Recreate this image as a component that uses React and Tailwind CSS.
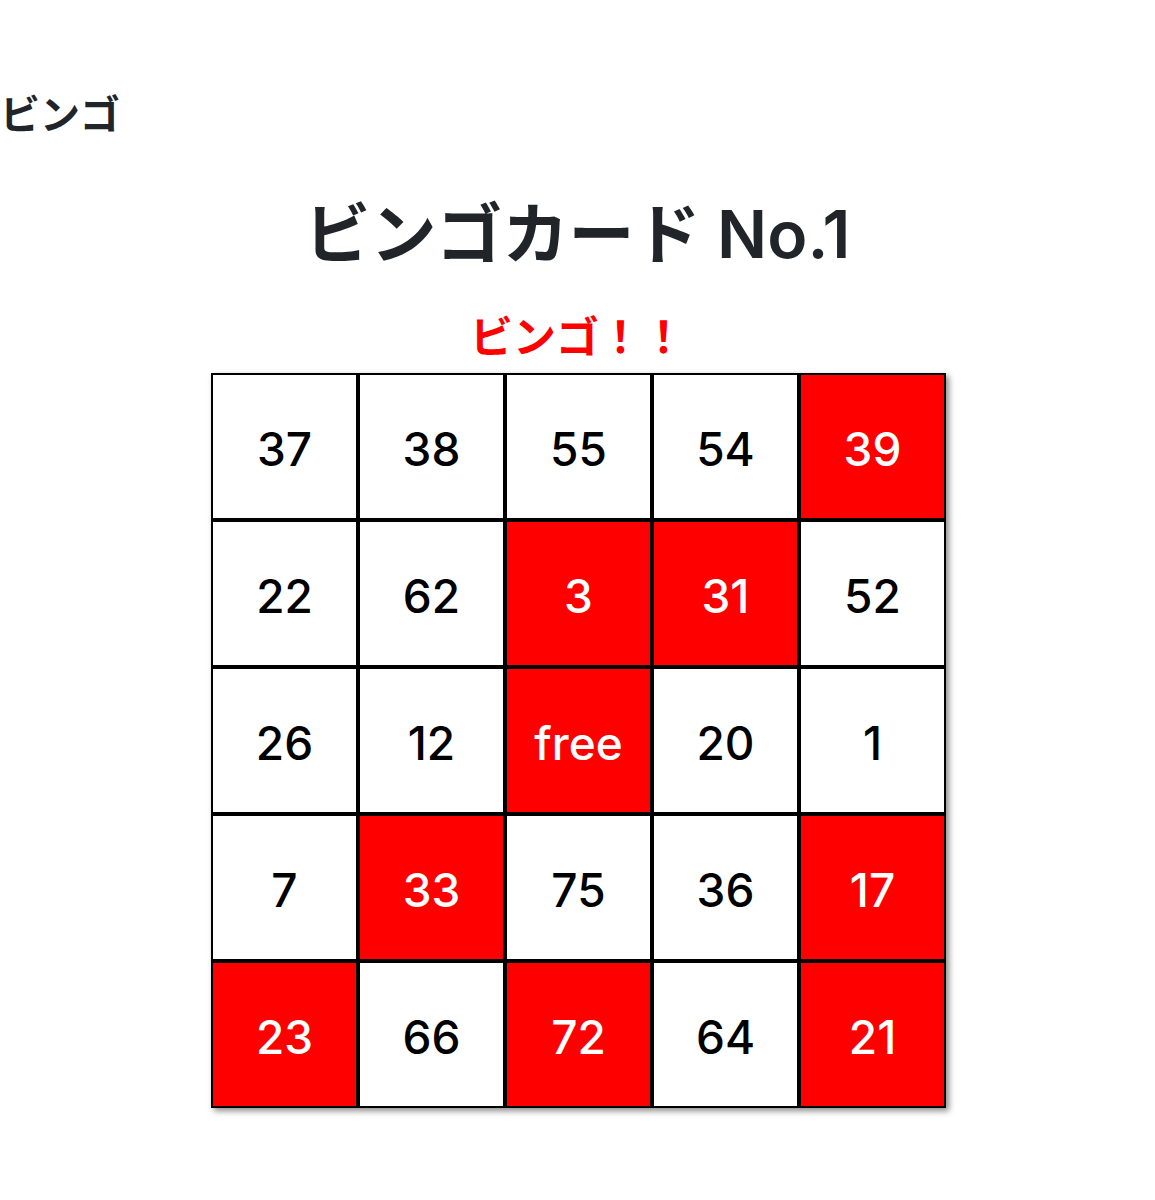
const cells = [
    [37, false], [38, false], [55, false], [54, false], [39, true],
    [22, false], [62, false], [3, true], [31, true], [52, false],
    [26, false], [12, false], ['free', true], [20, false], [1, false],
    [7, false], [33, true], [75, false], [36, false], [17, true],
    [23, true], [66, false], [72, true], [64, false], [21, true]
];

const App = () => {
    return (
        <div className="min-h-[1200px] bg-white font-['Inter','Noto_Sans_CJK_JP',sans-serif] text-[#212529]">
            <h1 className="pt-[91px] text-[40px] leading-[48px] font-bold">ビンゴ</h1>
            <div className="flex flex-col items-center">
                <h2 className="mt-[57px] text-[66px] leading-[77px] font-semibold">
                    ビンゴカード No.1
                </h2>
                <div className="mt-[39px] text-[43px] leading-[50px] font-bold text-[#ff0000]">
                    ビンゴ！！
                </div>
                <div className="mt-[11px] ml-[2px] grid grid-cols-5 w-[735px] shadow-[3px_3px_6px_rgba(0,0,0,0.45)]">
                    {cells.map(([value, hit], i) => (
                        <div
                            key={i}
                            className={
                                hit
                                    ? 'h-[147px] pt-[6px] border-2 border-black bg-[#ff0000] text-white flex items-center justify-center text-[46px] font-medium'
                                    : 'h-[147px] pt-[6px] border-2 border-black bg-white text-black flex items-center justify-center text-[46px] font-medium'
                            }
                        >
                            {value}
                        </div>
                    ))}
                </div>
            </div>
        </div>
    );
};

export default App;
